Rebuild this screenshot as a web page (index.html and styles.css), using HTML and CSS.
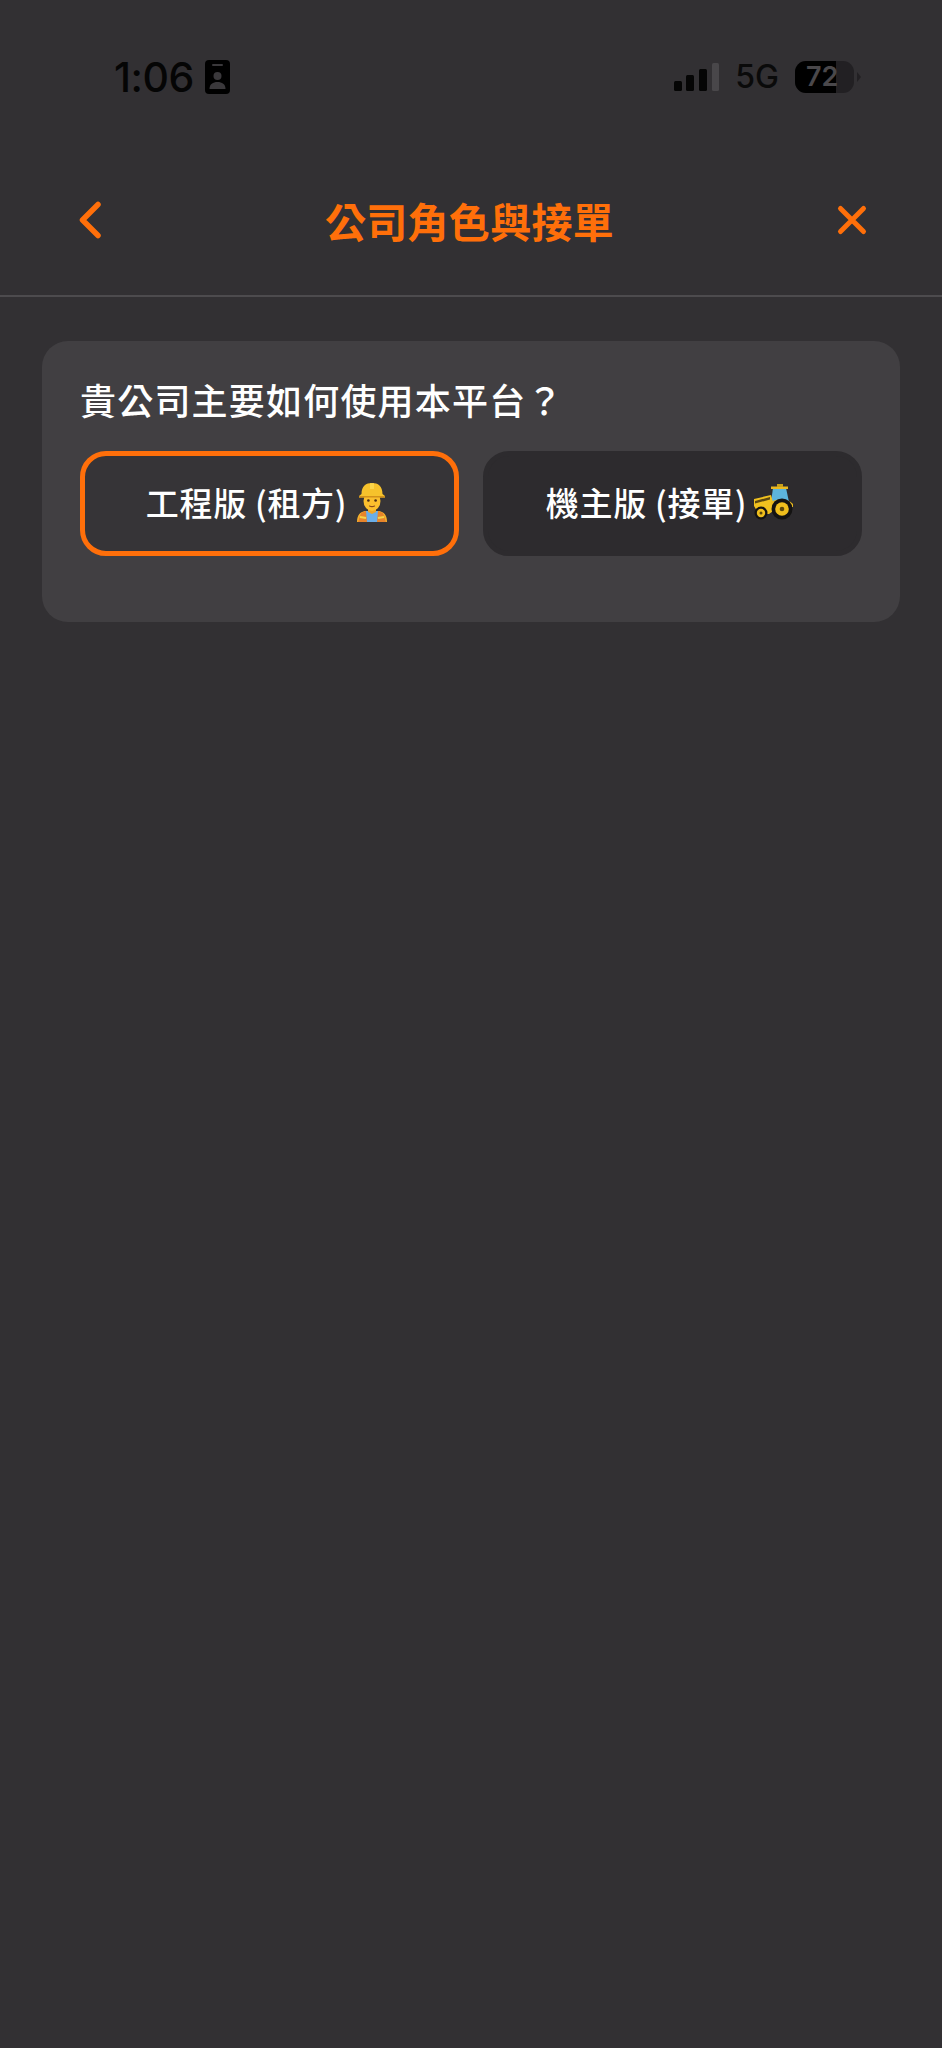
FILE: index.html
```html
<!DOCTYPE html>
<html lang="zh-Hant">
<head>
<meta charset="utf-8">
<title>公司角色與接單</title>
<link rel="stylesheet" href="styles.css">
</head>
<body>
<div class="screen">
  <div class="status">
    <div class="status-left">
      <span class="time">1:06</span>
      <svg class="badge" viewBox="0 0 25 34" width="25" height="34">
        <rect width="25" height="34" rx="4" fill="#000"/>
        <rect x="7" y="4" width="11" height="2" rx="1" fill="#3a383b"/>
        <circle cx="12.5" cy="16" r="4" fill="#3a383b"/>
        <path d="M4.5 29c0-5 3.5-7 8-7s8 2 8 7z" fill="#3a383b"/>
      </svg>
    </div>
    <div class="status-right">
      <svg class="signal" viewBox="0 0 46 30" width="46" height="30">
        <rect x="0" y="19" width="8" height="10" rx="1.5" fill="#050505"/>
        <rect x="12" y="13" width="8" height="16" rx="1.5" fill="#050505"/>
        <rect x="25" y="7" width="8" height="22" rx="1.5" fill="#050505"/>
        <rect x="38" y="1" width="7" height="28" rx="1.5" fill="#49474a"/>
      </svg>
      <span class="network">5G</span>
      <div class="battery"><div class="battery-fill" style="width:70%"></div><span class="battery-text">72</span></div>
      <span class="battery-cap"></span>
    </div>
  </div>

  <header class="nav">
    <svg class="nav-icon" viewBox="0 0 26 40" width="26" height="40"><path d="M21 4.500 5.500 20 21 35.500" fill="none" stroke="#ff6f0a" stroke-width="5.500" stroke-linecap="round" stroke-linejoin="round"/></svg>
    <h1 class="title">公司角色與接單</h1>
    <svg class="nav-icon" viewBox="0 0 32 32" width="32" height="32"><path d="M4.500 4.500l23 23M27.500 4.500l-23 23" fill="none" stroke="#ff6f0a" stroke-width="5" stroke-linecap="round"/></svg>
  </header>

  <section class="card">
    <h2 class="question">貴公司主要如何使用本平台？</h2>
    <div class="choices">
      <button class="choice selected">
        <span class="choice-label">工程版 (租方)</span>
        <svg class="emoji emoji-worker" viewBox="0 0 32 40" width="32" height="40">
          <path d="M1 40c0-7 3-10 8-11h14c5 1 8 4 8 11z" fill="#f4b12c"/>
          <path d="M10 29h12l2 11H8z" fill="#6aaee8"/>
          <path d="M2 40l3-9 5-2 1 11zM30 40l-3-9-5-2-1 11z" fill="#e7842b"/>
          <path d="M4 35l6 1M28 35l-6 1" stroke="#f6d548" stroke-width="2"/>
          <path d="M12 26h8v4l-4 2-4-2z" fill="#eea526"/>
          <ellipse cx="16" cy="19" rx="8.5" ry="10" fill="#fbbf2e"/>
          <circle cx="12.4" cy="18.5" r="1.3" fill="#4a2d16"/>
          <circle cx="19.6" cy="18.5" r="1.3" fill="#4a2d16"/>
          <path d="M13.5 24c1.700.8 3.300.8 5 0" stroke="#8a4b1c" stroke-width="1.200" fill="none" stroke-linecap="round"/>
          <path d="M5.500 12C5.500 4 10 1 16 1s10.500 3 10.500 11l2.500 2v1.500H3V14z" fill="#f6c22c"/>
          <path d="M3 14h26v1.500H3z" fill="#d2911a"/>
          <path d="M14 1.200h4V7h-4z" fill="#fbd54a"/>
        </svg>
      </button>
      <button class="choice">
        <span class="choice-label">機主版 (接單)</span>
        <svg class="emoji emoji-tractor" viewBox="0 0 41 36" width="41" height="36">
          <path d="M18 18 20 4h13l3 14z" fill="#5db4dc"/>
          <path d="M18 2.500h17V5H18z" fill="#e9b91f"/>
          <path d="M24 0h6v3h-6z" fill="#c9a01a"/>
          <path d="M1 15l17-4 2 7 3 7-7 5H9l-5-3-3-5z" fill="#f0c11f"/>
          <path d="M2 17l15-4v2.500L2 19.500z" fill="#5c4810"/>
          <path d="M18 18c4-3 16-4 22 2v3H19z" fill="#e9b91f"/>
          <circle cx="8" cy="29" r="6.500" fill="#141312"/>
          <circle cx="8" cy="29" r="4.200" fill="#efbe1d"/>
          <circle cx="8" cy="29" r="1.500" fill="#5b470d"/>
          <circle cx="29" cy="25" r="10.500" fill="#141312"/>
          <circle cx="29" cy="25" r="6.800" fill="#efbe1d"/>
          <circle cx="29" cy="25" r="2.300" fill="#5b470d"/>
        </svg>
      </button>
    </div>
  </section>
</div>
</body>
</html>
```
FILE: styles.css
```css
* { box-sizing: border-box; }
html, body { margin: 0; padding: 0; }
body {
  background: #323033;
  font-family: "Noto Sans CJK TC", "Liberation Sans", sans-serif;
  color: #fff;
}
.screen { width: 942px; height: 2048px; overflow: hidden; }
.status {
  height: 153px;
  padding: 57px 81px 0 114px;
  display: flex;
  justify-content: space-between;
  align-items: flex-start;
  color: #050505;
}
.status-left, .status-right { display: flex; align-items: center; height: 40px; }
.status-left { gap: 11px; }
.time { font-family: "Inter", sans-serif; font-size: 41px; font-weight: 500; letter-spacing: -0.5px; line-height: 40px; }
.signal { margin-right: 15px; }
.network { font-family: "Inter", sans-serif; font-size: 32px; font-weight: 500; color: #0a0a0a; margin-right: 16px; line-height: 40px; }
.battery {
  position: relative;
  width: 59px;
  height: 32px;
  border-radius: 11px;
  background: #222023;
  overflow: hidden;
  display: flex;
}
.battery-fill { height: 100%; background: #000; }
.battery-text {
  position: absolute;
  inset: 0;
  padding-left: 11px;
  font-family: "Inter", sans-serif;
  font-size: 27px;
  font-weight: 600;
  line-height: 32px;
  color: #4a484b;
}
.battery-cap {
  width: 0;
  height: 0;
  margin-left: 3px;
  border-top: 5px solid transparent;
  border-bottom: 5px solid transparent;
  border-left: 4px solid #222023;
}
.nav {
  height: 144px;
  padding: 0 74px 9px 77px;
  display: flex;
  justify-content: space-between;
  align-items: center;
  border-bottom: 2px solid #4d4b4e;
}
.title {
  margin: 0;
  font-size: 41px;
  font-weight: 700;
  letter-spacing: 0.3px;
  line-height: 50px;
  color: #ff6f0a;
}
.card {
  margin: 44px 42px 0;
  height: 281px;
  padding: 35px 38px 0;
  background: #413f42;
  border-radius: 26px;
}
.question {
  margin: 0 0 29px;
  font-size: 36px;
  font-weight: 500;
  line-height: 46px;
  letter-spacing: 1.2px;
  color: #fff;
}
.choices { display: flex; gap: 24px; }
.choice {
  flex: 1;
  height: 105px;
  display: flex;
  justify-content: center;
  align-items: center;
  padding: 0 5px 3px 0;
  font-family: inherit;
  font-size: 33px;
  font-weight: 500;
  color: #fff;
  background: #2d2b2e;
  border: 5px solid #2d2b2e;
  border-radius: 26px;
}
.choice.selected { border-color: #ff6f0a; background: #363437; }
.choice-label { letter-spacing: 0.7px; }
.emoji { flex: none; }
.emoji-worker { margin-left: 9px; }
.emoji-tractor { margin-left: 6px; }
```
